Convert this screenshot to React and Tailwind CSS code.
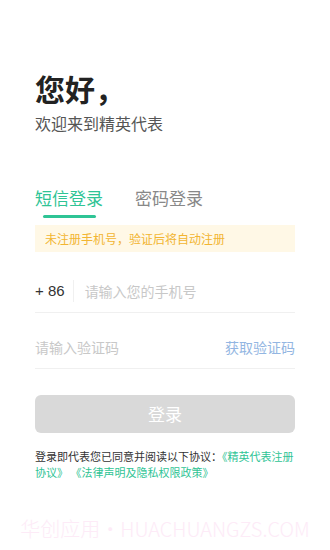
import React from 'react';

const font = { fontFamily: '"Noto Sans CJK SC", "Noto Sans", sans-serif' };

export default function App() {
  return (
    <div className="w-[330px] h-[550px] bg-white overflow-hidden flex flex-col px-[35px] font-['Noto_Sans_CJK_SC',sans-serif]">
      {/* 标题 */}
      <h1 className="mt-[66px] text-[30px] leading-[44px] font-bold text-[#222]">您好，</h1>
      <p className="mt-[2px] text-[16px] leading-[22px] text-[#555]">欢迎来到精英代表</p>

      {/* 登录方式切换 */}
      <div className="mt-[52px] flex gap-[32px]">
        <div className="flex flex-col items-center">
          <span className="text-[17px] leading-[24px] text-[#2fc495]">短信登录</span>
          <span className="mt-[5px] w-[53px] h-[3px] rounded-full bg-[#2fc495]" />
        </div>
        <span className="text-[17px] leading-[24px] text-[#888]">密码登录</span>
      </div>

      <div className="mt-[7px] h-[27px] bg-[#fff8e6] flex items-center px-[10px] text-[12px] text-[#f2b531]">
        未注册手机号，验证后将自动注册
      </div>

      {/* 手机号 */}
      <div className="mt-[18px] h-[43px] flex items-center border-b border-[#f0f0f0]">
        <span className="text-[15px] text-[#333] font-['Liberation_Sans',sans-serif]">+ 86</span>
        <span className="ml-[8px] w-px h-[22px] bg-[#f0f0f0]" />
        <span className="ml-[11px] text-[14px] text-[#c8c8c8]">请输入您的手机号</span>
      </div>

      {/* 验证码 */}
      <div className="mt-[13px] h-[43px] flex items-center justify-between border-b border-[#f0f0f0]">
        <span className="text-[14px] text-[#c8c8c8]">请输入验证码</span>
        <span className="text-[14px] text-[#93b6e2]">获取验证码</span>
      </div>

      <button type="button" className="mt-[26px] h-[38px] rounded-[6px] bg-[#d9d9d9] text-white text-[17px]">
        登录
      </button>

      <p className="mt-[15px] text-[11px] leading-[16px] text-[#333] whitespace-nowrap">
        登录即代表您已同意并阅读以下协议：<span className="text-[#2fc495]">《精英代表注册</span>
        <br />
        <span className="text-[#2fc495]">协议》 《法律声明及隐私权限政策》</span>
      </p>

      <div className="mt-[37px] -mx-[20px] text-center text-[20px] leading-[24px] font-light text-[#fdebf7] whitespace-nowrap" style={font}>
        华创应用・HUACHUANGZS.COM
      </div>
    </div>
  );
}
